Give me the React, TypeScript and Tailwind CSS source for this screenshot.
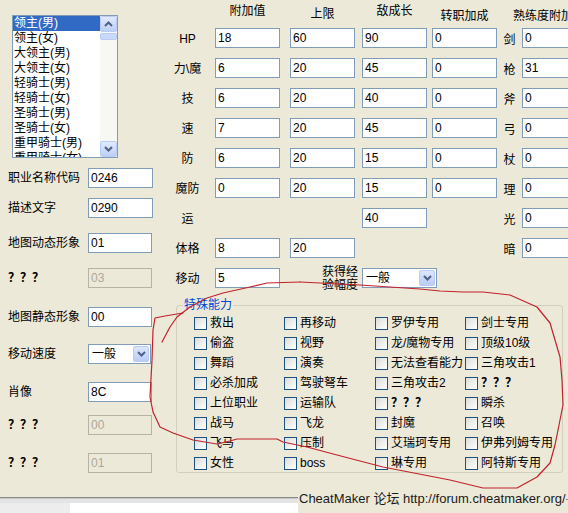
import React from "react";

function Chevron({ up = false }: { up?: boolean }) {
  return (
    <svg width="9" height="6" viewBox="0 0 9 6">
      <path
        d={up ? "M1 5 L4.5 1.5 L8 5" : "M1 1 L4.5 4.5 L8 1"}
        fill="none"
        stroke="#4D6185"
        strokeWidth="2"
      />
    </svg>
  );
}

function Field({ v, w = "w-[65px]", disabled = false }: { v?: string; w?: string; disabled?: boolean }) {
  return (
    <div
      className={`${w} h-[20px] shrink-0 border pl-[2px] pt-[1px] text-[12px] leading-[16px] ${
        disabled ? "border-[#B5B2A6] bg-[#ECE9D8] text-[#ACA899]" : "border-[#7F9DB9] bg-white text-black"
      }`}
    >
      {v}
    </div>
  );
}

function Blank({ w = "w-[65px]" }: { w?: string }) {
  return <div className={`${w} h-[20px] shrink-0`} />;
}

function Combo({ text, w }: { text: string; w: string }) {
  return (
    <div className={`${w} h-[20px] shrink-0 border border-[#7F9DB9] bg-white flex items-center`}>
      <span className="flex-1 pl-[3px] text-[12px] leading-[16px]">{text}</span>
      <div className="w-[16px] h-[16px] mr-[1px] rounded-[2px] border border-[#B9CCF5] bg-linear-to-b from-[#DCE6FD] to-[#B9CCF7] flex items-center justify-center">
        <Chevron />
      </div>
    </div>
  );
}

function Check({ label, bold = false }: { label: string; bold?: boolean }) {
  return (
    <div className="flex items-center h-[20px]">
      <div className="w-[13px] h-[13px] shrink-0 border border-[#1C5180] bg-linear-to-br from-[#DCDCD7] to-white" />
      <span className={`ml-[3px] text-[12px] leading-[14px] whitespace-nowrap text-black ${bold ? "font-bold" : ""}`}>
        {label}
      </span>
    </div>
  );
}

function LeftRow({ label, children, mt, bold = false }: { label: string; children: React.ReactNode; mt: string; bold?: boolean }) {
  return (
    <div className={`flex items-center h-[20px] ${mt}`}>
      <div className={`w-[88px] pl-[8px] text-[12px] leading-[14px] whitespace-nowrap ${bold ? "font-bold" : ""}`}>{label}</div>
      {children}
    </div>
  );
}

type Cell = string | null;

function StatRow({ label, a, b, c, d, wl, wv }: { label: string; a: Cell; b: Cell; c: Cell; d: Cell; wl: string; wv: string }) {
  return (
    <div className="flex items-center h-[20px] mt-[10px]">
      <div className="w-[55px] text-center text-[12px] leading-[14px] pt-[2px]">{label}</div>
      {a === null ? <Blank /> : <Field v={a} />}
      <div className="ml-[10px]">{b === null ? <Blank /> : <Field v={b} />}</div>
      <div className="ml-[7px]">{c === null ? <Blank /> : <Field v={c} />}</div>
      <div className="ml-[5px]">{d === null ? <Blank /> : <Field v={d} />}</div>
      <div className="w-[25px] text-center text-[12px] leading-[14px] pt-[3px]">{wl}</div>
      <Field v={wv} w="w-[60px]" />
    </div>
  );
}

const listItems = [
  "领主(男)",
  "领主(女)",
  "大领主(男)",
  "大领主(女)",
  "轻骑士(男)",
  "轻骑士(女)",
  "圣骑士(男)",
  "圣骑士(女)",
  "重甲骑士(男)",
  "重甲骑士(女)",
];

const col1 = ["救出", "偷盗", "舞蹈", "必杀加成", "上位职业", "战马", "飞马", "女性"];
const col2 = ["再移动", "视野", "演奏", "驾驶弩车", "运输队", "飞龙", "压制", "boss"];
const col3 = ["罗伊专用", "龙/魔物专用", "无法查看能力", "三角攻击2", "？？？", "封魔", "艾瑞珂专用", "琳专用"];
const col4 = ["剑士专用", "顶级10级", "三角攻击1", "？？？", "瞬杀", "召唤", "伊弗列姆专用", "阿特斯专用"];

export default function App() {
  const checks: string[] = [];
  for (let i = 0; i < 8; i++) {
    checks.push(col1[i], col2[i], col3[i], col4[i]);
  }
  return (
    <div className="relative w-[568px] h-[513px] overflow-hidden bg-[#ECE9D8] text-black font-['Liberation_Sans','Noto_Sans_CJK_SC',sans-serif]">
      <div className="flex h-[488px]">
        {/* Left column */}
        <div className="w-[160px] shrink-0 flex flex-col">
          {/* Listbox */}
          <div className="ml-[12px] mt-[15px] w-[106px] h-[143px] border border-[#7F9DB9] bg-white flex overflow-hidden">
            <div className="flex-1 overflow-hidden">
              {listItems.map((t, i) => (
                <div
                  key={t}
                  className={`h-[15px] pl-[1px] text-[12px] leading-[15px] whitespace-nowrap ${
                    i === 0 ? "bg-[#316AC5] text-white" : "text-black"
                  }`}
                >
                  {t}
                </div>
              ))}
            </div>
            <div className="w-[17px] shrink-0 bg-[#F7F7F3] flex flex-col">
              <div className="h-[16px] rounded-[2px] border border-[#B9CCF5] bg-linear-to-b from-[#E1EAFE] to-[#BDCFF7] flex items-center justify-center">
                <Chevron up />
              </div>
              <div className="mt-[1px] h-[7px] rounded-[2px] border border-[#B9CCF5] bg-[#C9D8FB]" />
              <div className="flex-1" />
              <div className="h-[16px] rounded-[2px] border border-[#B9CCF5] bg-linear-to-b from-[#E1EAFE] to-[#BDCFF7] flex items-center justify-center">
                <Chevron />
              </div>
            </div>
          </div>

          <LeftRow label="职业名称代码" mt="mt-[10px]">
            <Field v="0246" />
          </LeftRow>
          <LeftRow label="描述文字" mt="mt-[10px]">
            <Field v="0290" />
          </LeftRow>
          <LeftRow label="地图动态形象" mt="mt-[15px]">
            <Field v="01" w="w-[64px]" />
          </LeftRow>
          <LeftRow label="？？？" mt="mt-[15px]" bold>
            <Field v="03" w="w-[64px]" disabled />
          </LeftRow>
          <LeftRow label="地图静态形象" mt="mt-[19px]">
            <Field v="00" w="w-[64px]" />
          </LeftRow>
          <LeftRow label="移动速度" mt="mt-[17px]">
            <Combo text="一般" w="w-[63px]" />
          </LeftRow>
          <LeftRow label="肖像" mt="mt-[18px]">
            <Field v="8C" w="w-[64px]" />
          </LeftRow>
          <LeftRow label="？？？" mt="mt-[13px]" bold>
            <Field v="00" w="w-[64px]" disabled />
          </LeftRow>
          <LeftRow label="？？？" mt="mt-[18px]" bold>
            <Field v="01" w="w-[64px]" disabled />
          </LeftRow>
        </div>

        {/* Right column */}
        <div className="flex-1 flex flex-col">
          {/* headers */}
          <div className="flex items-start h-[18px] text-[12px] leading-[14px]">
            <div className="w-[55px] shrink-0" />
            <div className="w-[65px] shrink-0 text-center mt-[4px]">附加值</div>
            <div className="w-[65px] shrink-0 text-center mt-[7px] ml-[10px]">上限</div>
            <div className="w-[65px] shrink-0 text-center mt-[4px] ml-[7px]">敌成长</div>
            <div className="w-[65px] shrink-0 text-center mt-[9px] ml-[5px]">转职加成</div>
            <div className="shrink-0 whitespace-nowrap mt-[9px] ml-[16px]">熟练度附加</div>
          </div>

          <StatRow label="HP" a="18" b="60" c="90" d="0" wl="剑" wv="0" />
          <StatRow label="力\魔" a="6" b="20" c="45" d="0" wl="枪" wv="31" />
          <StatRow label="技" a="6" b="20" c="40" d="0" wl="斧" wv="0" />
          <StatRow label="速" a="7" b="20" c="45" d="0" wl="弓" wv="0" />
          <StatRow label="防" a="6" b="20" c="15" d="0" wl="杖" wv="0" />
          <StatRow label="魔防" a="0" b="20" c="15" d="0" wl="理" wv="0" />
          <StatRow label="运" a={null} b={null} c="40" d={null} wl="光" wv="0" />
          <StatRow label="体格" a="8" b="20" c={null} d={null} wl="暗" wv="0" />

          {/* 移动 row */}
          <div className="flex items-center h-[20px] mt-[10px]">
            <div className="w-[55px] text-center text-[12px] leading-[14px] pt-[2px]">移动</div>
            <Field v="5" />
            <div className="ml-[42px] w-[38px] text-[12px] leading-[13px] pt-[2px] whitespace-nowrap">
              获得经
              <br />
              验幅度
            </div>
            <div className="ml-[2px]">
              <Combo text="一般" w="w-[75px]" />
            </div>
          </div>

          {/* group box */}
          <fieldset className="ml-[16px] mt-[9px] w-[387px] h-[176px] border border-[#D0D0BF] rounded-[3px]">
            <legend className="ml-[6px] px-[1px] text-[12px] leading-[16px] text-[#0046D5]">特殊能力</legend>
            <div className="grid grid-cols-[90px_91px_90px_90px] pl-[17px]">
              {checks.map((c, i) => (
                <Check key={i} label={c} bold={c === "？？？"} />
              ))}
            </div>
          </fieldset>
        </div>
      </div>

      {/* bottom strip */}
      <div className="flex h-[25px]">
        <div className="w-[298px] shrink-0 flex flex-col">
          <div className="h-[9px]" />
          <div className="h-[1px] bg-[#8A8A8A]" />
          <div className="h-[1px] bg-[#C8C8C8]" />
          <div className="h-[4px] bg-[#E4E4E4]" />
          <div className="flex flex-1">
            <div className="w-[70px] bg-[#EDEDED]" />
            <div className="flex-1 bg-white" />
          </div>
        </div>
        <div className="mt-[2px] ml-[1px] text-[13px] leading-[17px] text-[#1a1a1a] whitespace-nowrap">
          CheatMaker 论坛 http://forum.cheatmaker.org/
        </div>
        <div className="flex-1 flex flex-col">
          <div className="h-[11px]" />
          <div className="h-[1px] bg-[#8A8A8A]" />
        </div>
      </div>

      {/* hand-drawn red annotation */}
      <svg className="absolute inset-0 pointer-events-none" width="568" height="513" viewBox="0 0 568 513">
        <path
          d="M300 282 L267 283 L250 287 L223 293 L207 298 L190 307 L177 317 L170 327 L162 342"
          fill="none"
          stroke="#C0222C"
          strokeWidth="1.2"
          strokeLinejoin="round"
          strokeLinecap="round"
        />
        <path
          d="M183 313 L165 316 L155 318 L153 330 L152 360 L150 397 L153 412 L160 427 L173 433 L193 440 L217 444 L230 441 L237 439 L277 439 L283 442 L307 447 L337 455 L360 461 L383 467 L450 480 L483 488 L517 488 L537 477 L550 463 L555 445 L560 420 L563 405 L562 380 L560 357 L550 323 L537 307 L510 295 L483 292 L463 292 L440 291 L420 289 L360 285 L300 282"
          fill="none"
          stroke="#C0222C"
          strokeWidth="1.2"
          strokeLinejoin="round"
          strokeLinecap="round"
        />
      </svg>
    </div>
  );
}
